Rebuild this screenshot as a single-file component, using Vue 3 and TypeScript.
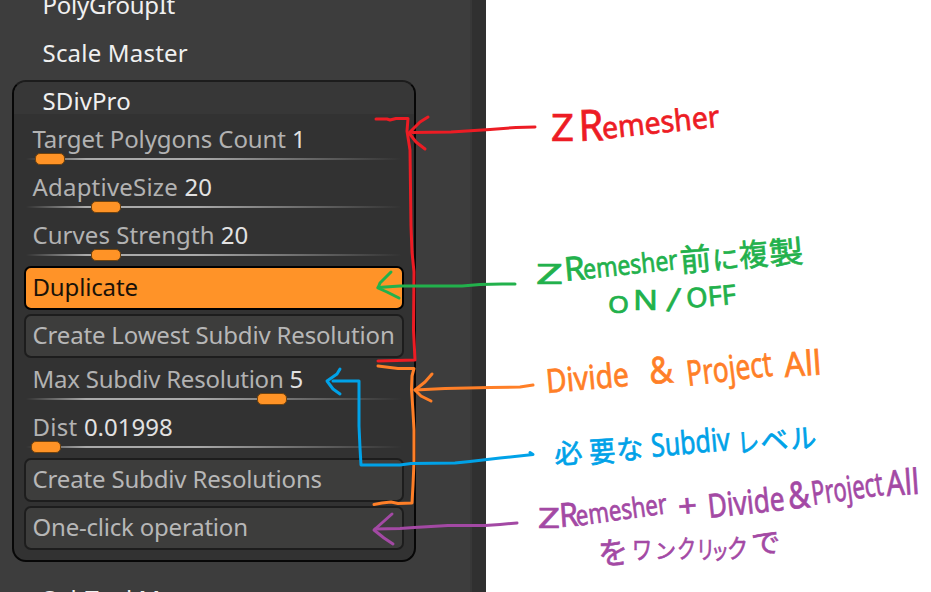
<script setup lang="ts">
interface Slider { kind: 'slider'; label: string; value: string; pos: number; tracking: number }
interface Button { kind: 'button'; label: string; active?: boolean; tracking: number }
type Item = Slider | Button

const items: Item[] = [
  { kind: 'slider', label: 'Target Polygons Count', value: '1', pos: 10, tracking: -0.08 },
  { kind: 'slider', label: 'AdaptiveSize', value: '20', pos: 66, tracking: 0.2 },
  { kind: 'slider', label: 'Curves Strength', value: '20', pos: 66, tracking: 0.05 },
  { kind: 'button', label: 'Duplicate', active: true, tracking: -0.15 },
  { kind: 'button', label: 'Create Lowest Subdiv Resolution', tracking: -0.17 },
  { kind: 'slider', label: 'Max Subdiv Resolution', value: '5', pos: 232, tracking: -0.24 },
  { kind: 'slider', label: 'Dist', value: '0.01998', pos: 6, tracking: 0.25 },
  { kind: 'button', label: 'Create Subdiv Resolutions', tracking: -0.16 },
  { kind: 'button', label: 'One-click operation', tracking: -0.21 },
]

// text, x, baseline y, angle, font size, drawn width
type Word = [string, number, number, number, number, number]
interface Note { color: string; strokes: string[]; words: Word[] }

const notes: Note[] = [
  {
    color: '#ed1c24',
    strokes: [
      'M376 119H387L390 120L396 118.500H408L407 131L410 150L411 226L412 252L414 272L413.500 330L415 360L378 361',
      'M535 127L516 127.500L490 129.500L451 132L412 132.500',
      'M428 117L420 122L409 133L416 142L425 149',
    ],
    words: [
      ['Z', 551, 141, 0, 38, 23],
      ['R', 579, 141, -2, 43, 25],
      ['emesher', 603, 139, -6, 30, 118],
    ],
  },
  {
    color: '#22b14c',
    strokes: ['M515 284H502L480 284.500L462 286H400L378 287.500', 'M391 272L380 283L378 288L387 292L399 298'],
    words: [
      ['Z', 536, 284, 0, 28, 27],
      ['R', 565, 281, -5, 33, 21],
      ['emesher', 584, 279, -6, 27, 95],
      ['前', 681, 272, -5, 31, 31],
      ['に', 713, 270, -5, 26, 27],
      ['複', 740, 267, -5, 31, 29],
      ['製', 770, 265, -5, 31, 34],
      ['O', 608, 313, 0, 24, 21],
      ['N', 633, 310, 0, 27, 25],
      ['/', 666, 311, 8, 34, 12],
      ['OFF', 687, 308, -5, 27, 50],
    ],
  },
  {
    color: '#ff7f27',
    strokes: [
      'M378 366L386 367L398 368.500H414L412 376L411.500 389L413 412L414 430V462L413 485L412 503L398 503.500L391 502L382 503L374 504.500',
      'M533 385L520 387L490 387.500L445 388.500L415 390',
      'M432 374L425 382L415 390L421 396L431 401',
    ],
    words: [
      ['Divide', 547, 393, -5, 33, 83],
      ['&', 650, 384, -4, 37, 24],
      ['Project', 688, 386, -7, 35, 86],
      ['All', 785, 377, -4, 34, 37],
    ],
  },
  {
    color: '#00a2e8',
    strokes: [
      'M333 381H359L359 426L360 448L361 465H400L411 463.500L455 463L470 461.500L500 458L533 454.500L530 452.500',
      'M340 369L337 374L327 381L333 389L340 394',
    ],
    words: [
      ['必', 555, 464, -4, 27, 28],
      ['要', 590, 463, -4, 29, 26],
      ['な', 617, 460, -4, 27, 27],
      ['Subdiv', 652, 457, -5, 32, 79],
      ['レ', 738, 453, -4, 27, 22],
      ['ベ', 761, 451, -4, 27, 28],
      ['ル', 791, 449, -4, 27, 26],
    ],
  },
  {
    color: '#a349a4',
    strokes: ['M517 523L500 524.500L485 525.500H448L414 527.500L400 528.500L375 529', 'M392 514L374 530L384 538L393 544'],
    words: [
      ['Z', 538, 528, 0, 28, 22],
      ['R', 560, 527, -4, 33, 19],
      ['emesher', 577, 526, -8, 28, 92],
      ['+', 679, 518, -5, 32, 19],
      ['Divide', 709, 518, -6, 33, 77],
      ['&', 789, 509, -5, 37, 22],
      ['Project', 813, 505, -8, 33, 72],
      ['All', 887, 496, -4, 35, 33],
      ['を', 599, 565, -4, 31, 30],
      ['ワ', 632, 559, 0, 25, 20],
      ['ン', 655, 558, 0, 21, 21],
      ['ク', 677, 558, 0, 25, 19],
      ['リ', 696, 559, 0, 25, 19],
      ['ッ', 711, 559, 0, 22, 18],
      ['ク', 727, 558, 0, 26, 21],
      ['で', 752, 554, -4, 28, 29],
    ],
  },
]
</script>

<template>
  <main class="page">
    <section class="palette">
      <div class="content">
        <h3 class="title first">PolyGroupIt</h3>
        <h3 class="title wide">Scale Master</h3>
        <div class="group">
          <h3 class="title head">SDivPro</h3>
          <div class="body">
            <template v-for="item in items" :key="item.label">
              <div v-if="item.kind === 'slider'" class="slider">
                <div class="caption">
                  <span :style="{ letterSpacing: item.tracking + 'px' }">{{ item.label }}&nbsp;</span>
                  <span class="value">{{ item.value }}</span>
                </div>
                <div class="track"><i class="thumb" :style="{ left: item.pos + 'px' }"></i></div>
              </div>
              <button
                v-else
                class="button"
                :class="{ active: item.active }"
                :style="{ letterSpacing: item.tracking + 'px' }"
              >{{ item.label }}</button>
            </template>
          </div>
        </div>
        <h3 class="title last">SubTool Master</h3>
      </div>
      <div class="gutter"></div>
    </section>
    <svg class="notes" width="931" height="592" viewBox="0 0 931 592">
      <g v-for="note in notes" :key="note.color">
        <path v-for="d in note.strokes" :key="d" :d="d" :stroke="note.color" class="stroke" />
        <text
          v-for="([t, x, y, a, size, len], i) in note.words"
          :key="i"
          :transform="`translate(${x} ${y}) rotate(${a})`"
          :font-size="size"
          :textLength="len"
          lengthAdjust="spacingAndGlyphs"
          :fill="note.color"
          :stroke="note.color"
          stroke-width="0.7"
        >{{ t }}</text>
      </g>
    </svg>
  </main>
</template>

<style>
body { background: #fff; overflow: hidden; }
</style>

<style scoped>
.page {
  position: relative;
  width: 931px;
  height: 592px;
  overflow: hidden;
  background: #fff;
  font-family: "Noto Sans", "Noto Sans CJK JP", sans-serif;
}
.palette { display: flex; width: 486px; height: 592px; background: #3d3d3d; overflow: hidden; }
.content { flex: 1; padding-left: 12px; }
.gutter { width: 14px; background: #303030; border-left: 2px solid #383838; }
.title {
  margin: 0;
  padding-left: 30.5px;
  height: 48px;
  line-height: 46px;
  font-size: 24px;
  font-weight: 400;
  color: #f0f0f0;
  white-space: nowrap;
}
.first { margin-top: -18px; letter-spacing: -0.25px; }
.wide { letter-spacing: 0.2px; }
.group {
  box-sizing: border-box;
  width: 404px;
  height: 482px;
  margin-top: 2px;
  border: 2px solid #070707;
  border-top-color: #1c1c1c;
  border-radius: 14px;
  background: #323232;
  overflow: hidden;
}
.head { height: 32px; line-height: 37px; padding-left: 28.5px; letter-spacing: 0.1px; background: #373737; }
.last { margin-top: 12px; height: 60px; line-height: 49px; }
.body { display: flex; flex-direction: column; gap: 4px; padding: 8px 10px 10px; }
.slider { height: 44px; padding: 0 2px; }
.caption {
  display: flex;
  height: 36px;
  padding-left: 6.5px;
  line-height: 33px;
  font-size: 24px;
  color: #b2b2b2;
  white-space: nowrap;
}
.value { color: #e2e2e2; }
.track {
  position: relative;
  height: 2px;
  background: linear-gradient(90deg, #32323200 0, #aaa 60px, #aaa 170px, #32323200 100%);
}
.thumb {
  position: absolute;
  top: -5px;
  width: 28px;
  height: 10px;
  margin-left: -1px;
  border: 1px solid #70430f;
  border-radius: 5px;
  background: #ff9326;
}
.button {
  box-sizing: border-box;
  width: 380px;
  height: 44px;
  padding: 0 0 2px 6.5px;
  border: 2px solid #1d1d1d;
  border-radius: 7px;
  background: #3d3d3c;
  color: #b7b7b7;
  font: 24px/38px "Noto Sans", sans-serif;
  text-align: left;
  white-space: nowrap;
}
.button.active { background: #ff9328; border-color: #000; color: #1a1208; }
.notes { position: absolute; inset: 0; }
.stroke { fill: none; stroke-width: 3; stroke-linecap: round; stroke-linejoin: round; }
</style>
